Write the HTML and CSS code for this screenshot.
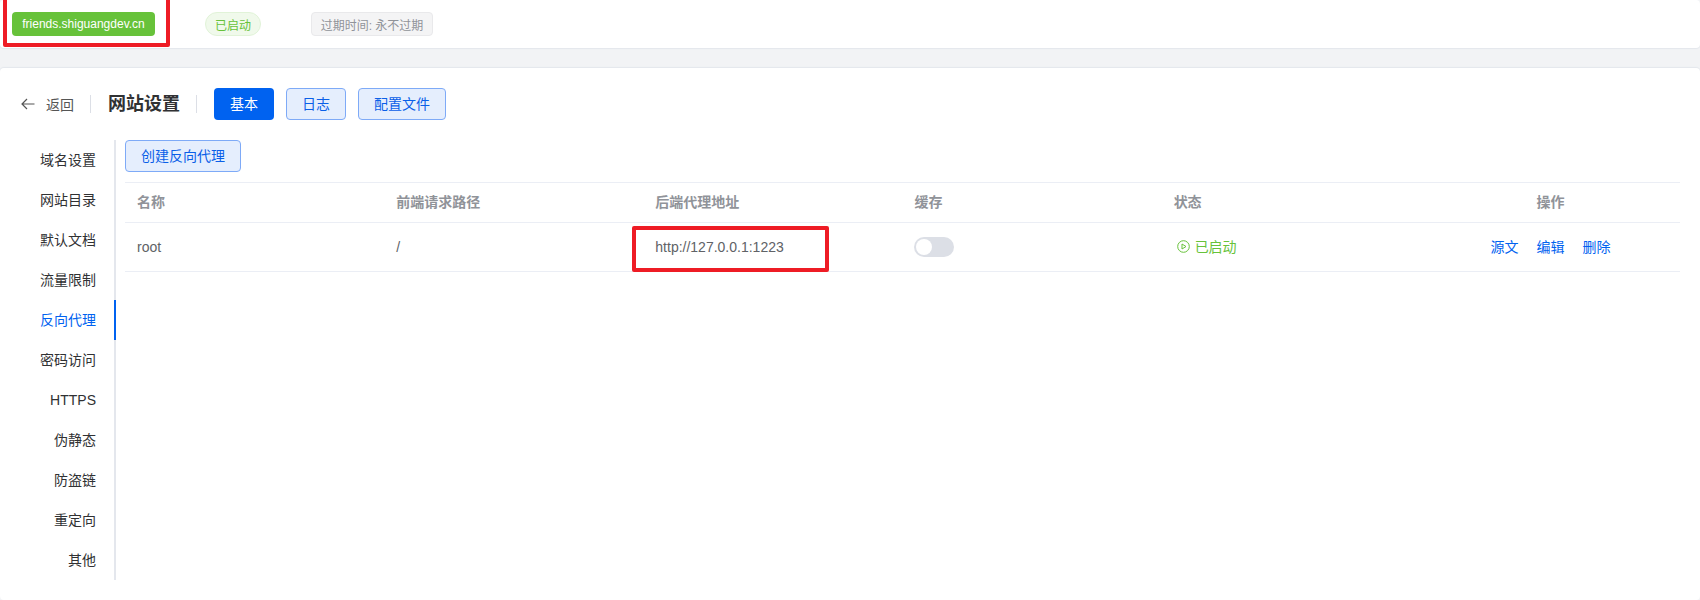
FILE: index.html
```html
<!DOCTYPE html>
<html lang="zh-CN">
<head>
<meta charset="utf-8">
<title>网站设置</title>
<link rel="stylesheet" href="styles.css">
</head>
<body>
<header class="topbar">
  <span class="tag tag-domain">friends.shiguangdev.cn</span>
  <span class="tag tag-status">已启动</span>
  <span class="tag tag-expire">过期时间: 永不过期</span>
</header>
<main class="card">
  <div class="titlebar">
    <a class="back">
      <svg class="back-icon" viewBox="0 0 14 14" width="14" height="14"><path d="M13.5 7H1M6 2 1 7l5 5" fill="none" stroke="#555" stroke-width="1.2"/></svg>
      <span>返回</span>
    </a>
    <h1 class="title">网站设置</h1>
    <div class="tabs">
      <button class="btn btn-primary">基本</button>
      <button class="btn btn-light">日志</button>
      <button class="btn btn-light">配置文件</button>
    </div>
  </div>
  <div class="body">
    <nav class="side">
      <a class="side-item">域名设置</a>
      <a class="side-item">网站目录</a>
      <a class="side-item">默认文档</a>
      <a class="side-item">流量限制</a>
      <a class="side-item active">反向代理</a>
      <a class="side-item">密码访问</a>
      <a class="side-item">HTTPS</a>
      <a class="side-item">伪静态</a>
      <a class="side-item">防盗链</a>
      <a class="side-item">重定向</a>
      <a class="side-item">其他</a>
    </nav>
    <section class="content">
      <button class="btn btn-light btn-create">创建反向代理</button>
      <table class="table">
        <thead>
          <tr><th>名称</th><th>前端请求路径</th><th>后端代理地址</th><th>缓存</th><th>状态</th><th class="center">操作</th></tr>
        </thead>
        <tbody>
          <tr>
            <td>root</td>
            <td>/</td>
            <td class="addr">http://127.0.0.1:1223<span class="mark mark-addr"></span></td>
            <td><span class="switch"><i class="knob"></i></span></td>
            <td class="raised">
              <span class="running">
                <svg viewBox="0 0 13 13" width="13" height="13"><circle cx="6.5" cy="6.5" r="5.8" fill="none" stroke="#67c23a"/><path d="M5 4v5l4-2.5z" fill="none" stroke="#67c23a"/></svg>
                已启动
              </span>
            </td>
            <td class="center actions raised"><a>源文</a><a>编辑</a><a>删除</a></td>
          </tr>
        </tbody>
      </table>
    </section>
  </div>
</main>
<span class="mark mark-domain"></span>
</body>
</html>
```
FILE: styles.css
```css
* { box-sizing: border-box; }
html, body { margin: 0; height: 100%; }
body {
  width: 1700px;
  height: 600px;
  overflow: hidden;
  background: #f2f3f5;
  position: relative;
  font-family: "Liberation Sans", "Noto Sans CJK SC", sans-serif;
  font-size: 14px;
  color: #303133;
}
.topbar {
  height: 48px;
  background: #fff;
  display: flex;
  align-items: center;
  padding: 0 0 0 12px;
  border-radius: 4px;
  box-shadow: 0 1px 1px rgba(160, 175, 200, .18);
}
.tag {
  display: inline-flex;
  align-items: center;
  justify-content: center;
  height: 24px;
  font-size: 12px;
  border: 1px solid transparent;
  border-radius: 4px;
}
.tag-domain { width: 143px; background: #67c23a; color: #fff; }
.tag-status {
  width: 56px;
  margin-left: 50px;
  border-radius: 12px;
  background: #f0f9eb;
  border-color: #e1f3d8;
  color: #67c23a;
}
.tag-expire {
  width: 122px;
  margin-left: 50px;
  background: #f4f4f5;
  border-color: #e9e9eb;
  color: #909399;
}
.mark { position: absolute; border: 4px solid #ee1c25; border-radius: 2px; pointer-events: none; }
.mark-domain { left: 3px; top: -4px; width: 167px; height: 51px; }
.mark-addr { left: -11px; top: 3px; width: 197px; height: 46px; }
.card {
  margin-top: 20px;
  height: 532px;
  background: #fff;
  border-radius: 4px;
  box-shadow: 0 -1px 1px rgba(160, 175, 200, .18);
  padding: 20px 20px 0 0;
}
.titlebar { display: flex; align-items: center; height: 32px; }
.back {
  display: flex;
  align-items: center;
  gap: 11px;
  width: 91px;
  height: 18px;
  padding-left: 21px;
  border-right: 1px solid #dcdfe6;
  color: #555;
}
.title {
  margin: 0 0 0 17px;
  width: 89px;
  height: 18px;
  line-height: 18px;
  font-size: 18px;
  font-weight: 700;
  color: #303133;
  border-right: 1px solid #dcdfe6;
}
.tabs { display: flex; gap: 12px; margin-left: 17px; }
.btn {
  height: 32px;
  padding: 0 15px;
  border: 1px solid transparent;
  border-radius: 4px;
  font: inherit;
  font-size: 14px;
  line-height: 1;
}
.tabs .btn { min-width: 60px; }
.btn-primary { background: #0062f0; color: #fff; }
.btn-light { background: #e5eefd; border-color: #7eaaf7; color: #0a5fe8; }
.btn-create { width: 116px; padding: 0; display: block; }
.body { display: flex; margin-top: 20px; }
.side {
  width: 116px;
  height: 440px;
  flex: none;
  border-right: 2px solid #e4e7ed;
}
.side-item {
  display: block;
  height: 40px;
  line-height: 40px;
  text-align: right;
  padding-right: 20px;
  margin-right: -2px;
  color: #303133;
}
.side-item.active { color: #0062f0; border-right: 2px solid #0062f0; padding-right: 18px; }
.content { flex: 1; margin-left: 9px; min-width: 0; }
.table {
  margin-top: 10px;
  width: 1555px;
  table-layout: fixed;
  border-collapse: collapse;
  border-top: 1px solid #ebeef5;
}
th, td { padding: 0 12px; text-align: left; border-bottom: 1px solid #ebeef5; }
th { height: 40px; padding-bottom: 3px; font-weight: 700; color: #909399; font-size: 14px; }
td { height: 49px; color: #606266; font-size: 14px; }
td.raised { padding-bottom: 2px; }
th.center, td.center { text-align: center; }
.addr { position: relative; }
.switch {
  display: block;
  position: relative;
  width: 40px;
  height: 20px;
  border-radius: 10px;
  background: #dcdfe6;
}
.knob {
  position: absolute;
  left: 2px;
  top: 2px;
  width: 16px;
  height: 16px;
  border-radius: 50%;
  background: #fff;
}
.running { display: inline-flex; align-items: center; gap: 5px; color: #67c23a; font-size: 14px; margin-left: 3px; }
.actions a { color: #0062f0; font-size: 14px; }
.actions a + a { margin-left: 18px; }
```
